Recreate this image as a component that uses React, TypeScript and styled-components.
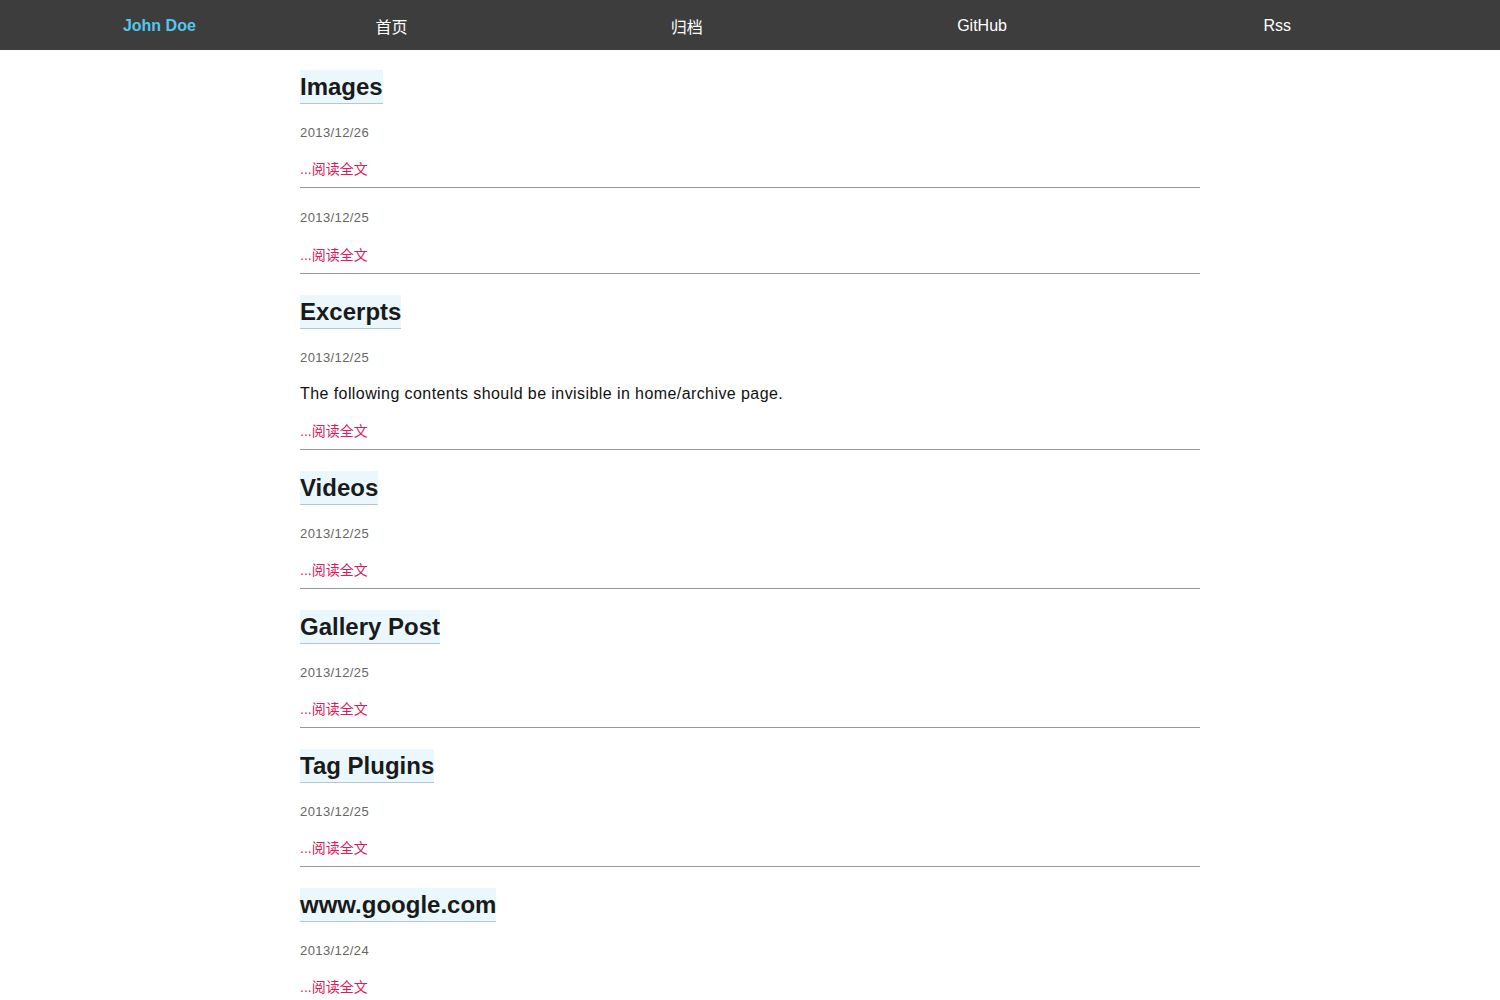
import React from "react";
import styled, { createGlobalStyle } from "styled-components";

const GlobalStyle = createGlobalStyle`
  html, body { margin: 0; padding: 0; background: #fff; }
  body {
    font-family: "Liberation Sans", Arial, "Noto Sans CJK SC", sans-serif;
    color: #111;
  }
  * { box-sizing: border-box; }
`;

const NavBar = styled.header`
  height: 50px;
  background: #3d3d3d;
  display: flex;
  align-items: center;
  padding: 1px 75px 0;
`;

const Brand = styled.a`
  flex: 0 0 12.5%;
  text-align: center;
  color: #54c7ec;
  font-size: 16px;
  font-weight: 700;
  text-decoration: none;
`;

const NavLink = styled.a`
  flex: 1 1 0;
  text-align: center;
  color: #fff;
  font-size: 16px;
  text-decoration: none;
`;

const Main = styled.main`
  width: 900px;
  margin: 0 auto;
  display: flex;
  flex-direction: column;
`;

const Post = styled.article`
  display: flex;
  flex-direction: column;
  align-items: flex-start;
  padding: 21px 0 8px;
  border-bottom: 1px solid #999;
  &:first-child { padding-top: 20px; }
  &:last-child { border-bottom: none; }
`;

const Title = styled.h2`
  margin: 0 0 20px;
  font-size: 24px;
  line-height: 33px;
  font-weight: 700;
  color: #1a1a1a;
  background: #eaf8fd;
  border-bottom: 1px solid #b3c9d1;
`;

const DateLine = styled.div<{ $gap: number }>`
  font-size: 13px;
  line-height: 18px;
  letter-spacing: 0.4px;
  color: #666;
  margin-bottom: ${(p) => p.$gap}px;
`;

const Excerpt = styled.p`
  margin: 0 0 15px;
  font-size: 16px;
  line-height: 24px;
  letter-spacing: 0.42px;
  color: #111;
`;

const ReadMore = styled.a`
  font-size: 14px;
  line-height: 20px;
  color: #e0195a;
  text-decoration: none;
`;

type PostData = { title?: string; date: string; body?: string };

const posts: PostData[] = [
  { title: "Images", date: "2013/12/26" },
  { date: "2013/12/25" },
  {
    title: "Excerpts",
    date: "2013/12/25",
    body: "The following contents should be invisible in home/archive page.",
  },
  { title: "Videos", date: "2013/12/25" },
  { title: "Gallery Post", date: "2013/12/25" },
  { title: "Tag Plugins", date: "2013/12/25" },
  { title: "www.google.com", date: "2013/12/24" },
];

export default function App() {
  return (
    <>
      <GlobalStyle />
      <NavBar>
        <Brand href="#">John Doe</Brand>
        <NavLink href="#">首页</NavLink>
        <NavLink href="#">归档</NavLink>
        <NavLink href="#">GitHub</NavLink>
        <NavLink href="#">Rss</NavLink>
      </NavBar>
      <Main>
        {posts.map((p, i) => (
          <Post key={i}>
            {p.title && <Title>{p.title}</Title>}
            <DateLine $gap={p.body ? 15 : p.title ? 17 : 18}>{p.date}</DateLine>
            {p.body && <Excerpt>{p.body}</Excerpt>}
            <ReadMore href="#">...阅读全文</ReadMore>
          </Post>
        ))}
      </Main>
    </>
  );
}
